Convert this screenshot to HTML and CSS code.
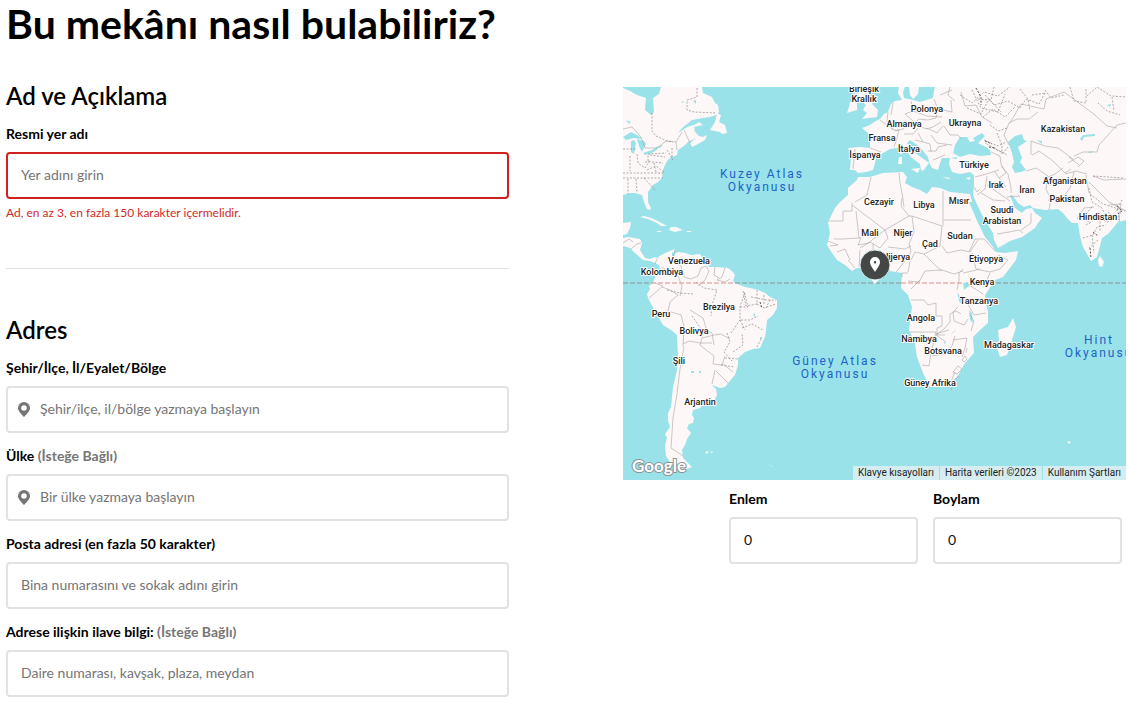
FILE: index.html
```html
<!DOCTYPE html>
<html lang="tr">
<head>
<meta charset="utf-8">
<title>Bu mekânı nasıl bulabiliriz?</title>
<link rel="stylesheet" href="styles.css">
</head>
<body>
<main class="page">
  <h1 class="title">Bu mekânı nasıl bulabiliriz?</h1>
  <div class="columns">
    <form class="form">
      <section class="section">
        <h2 class="heading">Ad ve Açıklama</h2>
        <div class="field">
          <label class="label" for="name">Resmi yer adı</label>
          <input class="input input-error" id="name" type="text" placeholder="Yer adını girin" aria-describedby="name-error">
          <p class="error" id="name-error">Ad, en az 3, en fazla 150 karakter içermelidir.</p>
        </div>
      </section>
      <hr class="divider">
      <section class="section">
        <h2 class="heading">Adres</h2>
        <div class="fields">
          <div class="field">
            <label class="label" for="city">Şehir/İlçe, İl/Eyalet/Bölge</label>
            <div class="input input-group">
              <svg class="pin" viewBox="0 0 12 15" aria-hidden="true"><path fill-rule="evenodd" d="M6 0a6 6 0 0 0-6 6c0 3 3.400 6.200 6 9 2.600-2.800 6-6 6-9a6 6 0 0 0-6-6zm0 3.200a2.800 2.800 0 1 1 0 5.600 2.800 2.800 0 0 1 0-5.600z"/></svg>
              <input class="bare" id="city" type="text" placeholder="Şehir/ilçe, il/bölge yazmaya başlayın">
            </div>
          </div>
          <div class="field">
            <label class="label" for="country">Ülke <span class="optional">(İsteğe Bağlı)</span></label>
            <div class="input input-group">
              <svg class="pin" viewBox="0 0 12 15" aria-hidden="true"><path fill-rule="evenodd" d="M6 0a6 6 0 0 0-6 6c0 3 3.400 6.200 6 9 2.600-2.800 6-6 6-9a6 6 0 0 0-6-6zm0 3.200a2.800 2.800 0 1 1 0 5.600 2.800 2.800 0 0 1 0-5.600z"/></svg>
              <input class="bare" id="country" type="text" placeholder="Bir ülke yazmaya başlayın">
            </div>
          </div>
          <div class="field">
            <label class="label" for="street">Posta adresi (en fazla 50 karakter)</label>
            <input class="input" id="street" type="text" placeholder="Bina numarasını ve sokak adını girin">
          </div>
          <div class="field">
            <label class="label" for="extra">Adrese ilişkin ilave bilgi: <span class="optional">(İsteğe Bağlı)</span></label>
            <input class="input" id="extra" type="text" placeholder="Daire numarası, kavşak, plaza, meydan">
          </div>
        </div>
      </section>
    </form>

    <aside class="location">
      <div class="map">
        <svg class="map-canvas" viewBox="623 87 503 393" preserveAspectRatio="xMidYMid slice" role="img" aria-label="Harita">
          <g class="land">
            <path d="M623 87H702L703 93 712 97 715 103 718 105 719 112 716 115 710 117 703 118 692 120 687 124 682 128 678 133 687 127 694 125 699 122 703 125 694 127 695 132 699 136 703 137 707 135 705 140 698 144 692 147 690 143 696 138 688 142 684 146 678 150 677 155 670 158 667 161 665 165 663 170 662 178 658 182 653 185 648 192 648 202 651 208 650 210 647 209 644 202 642 195 635 193 630 193 623 195z"/>
            <path d="M717 113 715 122 710 130 720 132 722 134 727 133 725 125 719 122 721 115z"/>
            <path d="M640 217 644 216 651 218 658 221 667 226 661 226 657 223 648 219zM669 230 671 227 676 227 683 230 675 232zM687 231h4v1h-4zM657 231h4v1h-4z"/>
            <path d="M623 223 631 222 630 228 627 234 623 235zM623 238 628 237 640 239 642 243 640 250 645 258 650 259 655 257 659 259 659 265 655 263 650 261 643 260 635 253 630 248 623 246z"/>
            <path d="M658 257 665 253 675 249 673 255 678 252 685 253 691 255 700 254 703 259 707 262 709 267 715 267 728 268 733 272 735 275 733 281 735 283 745 287 750 288 758 290 765 293 770 297 777 300 777 308 773 315 767 320 766 330 765 337 760 348 753 349 745 352 738 358 738 365 735 375 728 383 725 387 720 388 712 385 716 389 717 395 713 403 702 406 700 408 693 410 692 415 694 418 693 423 689 424 687 428 691 433 687 439 685 445 682 450 683 458 692 467 684 470 676 466 670 462 666 456 665 445 667 438 665 434 670 427 668 421 668 413 671 407 673 387 677 370 678 357 677 335 671 330 663 325 656 313 648 298 647 294 650 289 649 286 653 283 656 275 660 272 659 264z"/>
            <path d="M858 177 870 177 883 173 903 172 907 177 905 183 912 187 920 190 927 194 932 187 940 188 950 192 960 193 970 194 972 202 969 202 978 223 985 237 993 247 996 252 1005 253 1018 251 1016 260 1003 277 995 280 985 295 986 304 988 312 988 323 980 330 973 337 974 353 965 363 957 377 947 387 930 387 923 373 917 357 915 343 909 330 912 307 908 295 901 288 902 273 896 272 890 271 880 272 869 268 857 268 852 271 845 265 837 260 832 253 827 245 830 233 828 222 835 208 840 202 848 195 848 188 857 180z"/>
            <path d="M1013 318 1016 327 1012 340 1007 355 1000 357 997 348 999 340 998 330 1008 327z"/>
            <path d="M847 113 849 107 850 102 857 103 857 110zM853 87H870L868 93 870 100 873 105 878 110 877 117 862 119 867 113 863 110 866 105 861 101 855 95z"/>
            <path d="M848 148 860 147 870 148 870 140 868 133 862 128 870 125 874 122 880 119 884 114 888 112 891 104 895 101 902 100 898 93 899 87H905L903 92 904 98 913 100 920 102 933 98 934 91 935 87H1126V220L1118 222 1113 228 1108 234 1102 238 1100 246 1097 257 1091 261 1083 247 1080 236 1078 223 1072 223 1067 218 1063 213 1058 209 1045 210 1033 208 1030 205 1024 207 1018 203 1012 195 1010 195 1015 208 1022 213 1026 209 1032 208 1035 213 1042 218 1038 223 1035 228 1022 237 1010 241 998 248 994 240 993 233 983 217 975 200 973 195 974 185 974 175 970 172 960 174 952 172 949 164 950 158 942 158 940 163 938 170 932 168 929 162 928 157 920 147 910 140 907 143 915 153 925 160 929 163 923 171 921 170 920 164 912 158 907 152 902 145 897 148 890 149 883 153 876 158 875 163 873 170 866 172 858 173 855 170 850 170 851 157z"/>
            <path d="M909 87H919L918 94 913 99 910 95zM911 169 920 168 918 173zM899 157 902 157 902 164 898 164zM900 149h2v5h-2zM942 177l9 1-3 1zM966 178l5-1-2 3zM1100 256 1104 262 1102 267 1099 266 1098 260zM705 452l4-1-2 3zM710 452l3-1-1 2zM768 464l6 3-3-1zM1067 441l4 1-2 2z"/>
          </g>
          <g class="water">
            <path d="M623 87H661L659 94 653 98 654 112 651 115 645 110 646 98 637 95 630 91 623 88z"/>
            <path d="M626 120l5 2-2 2zM623 137l8-5 8 4 3 3-8-1-8 2zM631 141l3-1 2 3-2 11-3-2zM637 139l7 2 2 3-4 8-3-6zM643 153l9-3 5-3 1 2-6 4-7 2zM656 147l7-2-3 3zM681 102l3-1-1 2zM693 101l3-1v4zM672 252l3 2-1 5-2-2z"/>
            <path d="M953 153 955 145 960 137 967 137 970 142 975 141 973 138 982 133 985 136 978 143 986 147 990 150 991 155 980 156 970 154 960 157z"/>
            <path d="M1008 142 1015 136 1022 134 1024 140 1027 141 1018 147 1022 158 1020 162 1026 170 1021 172 1015 173 1012 167 1014 162 1012 153zM1080 139l3-4 12-1v2l-11 1-2 4zM1037 140l5 1v3zM1107 105l4-1-1 3zM1088 152l6-1-4 2zM1109 129l3 2zM950 158l7-1v2zM963 283l5-1 1 4-5 4zM957 292l2 9 4 5-1-7zM969 310l3 3 1 10-3-3zM951 334l5-5-2 3zM944 342l2 1-2 1zM691 371h3v2h-3zM699 371h2v2h-2zM760 337h2v2h-2zM753 315l2-2v4z"/>
          </g>
          <g class="border">
            <path d="M623 129 632 127 641 137 645 148 657 148 666 141 676 142 682 132M676 142 677 150M690 143 684 130M623 243l6-4 4 3M631 249l6-5 4-1M657 259l-2 5M661 267l10 5 7 4 4 10-2 10M675 250l-3 10 9 6 3 11 7 2M691 279l7-3 3-8 5-2M706 266l3 5-4 9-7 6M715 267l-1 8 5 3M725 268l-3 9-5 3 8 2 5-3M655 283l8 3-8 7-6 5M662 287l8 3 8 5-8 7-2 9 13 4M681 315l3 11-1 21M683 344l6-3 11 2 12 0M690 310l13 8 4 13 5 2 2 12M700 345l2-7 12-3 7-1 9 5M700 345l14 11-1 8 9 1 3-9M684 347l-4 22-3 25-4 24-2 30 12 8M723 364l10 8M716 371l12 12M712 384l3-14M855 202l12-7 4-18M852 203v8h-9v10h-15M899 173l1 10 2 10 2 14M902 198l-1 8 8 10-24 14-33-25M856 211l3 27-17 1-8 0M859 238l2 0-3 7 11-2 4-4 12-9M885 230l3 8-8 10-10-6-10 6M828 241l10 4-8 1M837 252l8-3 5 11M848 260l7 8M860 250l-1 17M873 244l1 24M884 252l-2 18M888 247l17 2 6-3M909 216l3 0 30 10M943 191v35M944 220h27M942 226l-2 20-16 8-9-2M912 216l2 16-5 12 2 8-6 9-9 11M915 252l-5 10-2 10M908 273h-6v4M924 254l12 12 6 5M942 246l5 7 14-3 9 2 8-12M908 281l11 1 6-11 17-1 12 4 9-3M911 289l9-9M911 300h13l4 5 8-2v13h6v10l-5 2v7l8 0M910 332h26l-2 9-3 12-2 13-7-1M936 334l13-4M932 356l12-2 8-8 3-10M946 342l-10-7M936 335l8-6 6-7 0-8 6-3 5 3M953 340l14-2-2 10-3 9M950 384l5-12M967 348l-1 5M951 390l3-10 5-4M957 290l2-9 0-8 4-4M966 283l17 11M966 301l8 14 12-2M958 307l-5 5 1 9 10 4 4-6M969 252l6-13 9 0 11 12M972 253l4 16 14 3 10-3 8-9-10-5M990 273l-3 7 0 8M963 273l9-2 8-2M970 315l4 6-3 10M953 372l5-6 4 3-5 5zM962 360l3-4 2 3-3 3z"/>
            <path d="M855 149l-2 20M870 148l11 4M880 120l14 10 5 0-2 8-3 9M888 112l-1 9 6 9M893 103l-2 12M911 101l2 10-8 3 8 7-10 8-8 2M913 111l14 5 15 1M934 99l4 10-2 9-8 2-9-1-10 9M938 109l14 3-1-12M950 87l-2 8 7 6M940 95l12-5M904 134l9 0 6-7 10 2 8 4 6-7M918 133l5 9 7 2 1 8M915 140l8 2M931 135l6 8 15 2M928 151l8 0 2-4 9-2M933 160l12-5M926 129l7-2 8-5M944 126l6 9 8 0 3 4M961 92l4 14 11-1 6 12 10 6M991 152l9 4 1 8 5 9-7 5-4-6M985 143l22 12M1001 166l7 8 3 14 0 5M975 177l8-2 16-5M974 187l3 5 3-3M977 195l8-6 2-13M987 185l23 16M981 193l12 7 12 1M1020 196l-13 1M997 234l12-2 10-2 4 3M1021 230l10-7 0-10M999 178l7 9M1026 171l10-3 12 8-2 13 5 10-2 11M1031 155V141l14 5 13 2 15 11M1046 178l9-4 8-6M1032 155l7-4 14 10 12 12 6-4M1065 174l11-3 11 3M1048 200l13 0 9-12 4-16M1009 145l-5-10 5-12 8-4 12 0 9-7M1010 123l11-19 23 5 2-10 18-7 15 11 16 12 12 11 10 2M1086 175l3 18M1089 182l20 20 17 9M1077 219l7-11 10-1M1074 156l9-4 14 0 2-7 18-20 9-2M1093 176l11 4 22-1M1109 205l12-1-2 18M1069 157l10 8M1068 163l10-6 6 4-6 6"/>
          </g>
          <g class="border dashed">
            <path d="M652 113V131L656 136 667 141 673 142M697 88v9l-10 3 0 10 7 2 22 1M623 149h14M623 173H665M623 178h40M628 179v15M636 179l1 14M630 156v15M637 154l1 9 7 5 5-8M645 162l8 0 10 1M650 155l15 2M644 178l12 13M654 163l2 9M667 150l6 10M672 148v11M648 161l0-7 18-1M647 170l9-4 9 7M667 290l13 3 13 1M696 282l8 6 13 2-5 15-1 11M692 316l10 14 6 4M731 333l9-13 0-14 5-13M740 307l8 0-4-16M743 291l3 15 11-2 0-14M751 297l16 3 9 0M757 304l7 4 12-4M741 320l9 0 8-4M740 320l5 10M727 333l3 9-6 10 8 9M742 328l10-4 11 6M733 352l10-7-1-12M757 347l4-8M725 358l13 1M721 365l14 2M764 295v10M770 300l-4 8"/>
            <path d="M960 95l12 8 12-11 14 4 12-9M972 90l9 18 17 4 7-18M978 99l13 1 3-13M967 108l14 6 8-15 12 13M983 117l10-8 12 8 10-10M985 95l9 10 14-4 12 7 6-9 13 5 6-11M1020 89l8 10 2 12M1032 95l14-2M1045 90l6 8 13-3M1070 87l4 14 12 2 0-14M1087 96l10-9 14 9 15 1M1098 103l9 8 13 4M1112 97l2 14M984 140l14 6 8-4M993 148l10 5 5-6M997 133l5 12 0 9M990 125l8 6 9-3M1089 188l3 14 10 6 5 12M1092 207l-8 9 6 8M1083 238l10-3 4-8 9-2M1092 235l2 18M1086 225l13-8 8 5 10-3M1098 240l-9 8M1093 176l30 2M1090 194l13 10 22 7M1117 205l2 15M1108 212l6 5M1122 200l-6 12M1100 218l0 14"/>
          </g>
          <g class="border dashed dark"><path d="M976 88l5 9 0 8M985 141l7 3M989 147l7 1M1117 206l5 5-4 3M1090 248l1 10M1093 232l5 4M760 302l2 6"/></g>
          <path class="equator" d="M623 283H651M735 283H901M996 283H1126"/>
          <path class="equator equator-land" d="M651 283H735M901 283H962"/>
          <g class="place">
            <text x="864" y="92">Birleşik</text><text x="864" y="102">Krallık</text>
            <text x="927" y="112">Polonya</text><text x="904" y="127">Almanya</text>
            <text x="965" y="126">Ukrayna</text><text x="882" y="141">Fransa</text>
            <text x="909" y="152">İtalya</text><text x="865" y="158">İspanya</text>
            <text x="1063" y="132">Kazakistan</text><text x="974" y="168">Türkiye</text>
            <text x="996" y="188">Irak</text><text x="1027" y="193">İran</text>
            <text x="1065" y="184">Afganistan</text><text x="1067" y="202">Pakistan</text>
            <text x="1098" y="220">Hindistan</text><text x="879" y="205">Cezayir</text>
            <text x="924" y="208">Libya</text><text x="959" y="204">Mısır</text>
            <text x="1002" y="213">Suudi</text><text x="1002" y="224">Arabistan</text>
            <text x="870" y="236">Mali</text><text x="903" y="236">Nijer</text>
            <text x="930" y="247">Çad</text><text x="960" y="239">Sudan</text>
            <text x="896" y="260">Nijerya</text><text x="986" y="262">Etiyopya</text>
            <text x="982" y="285">Kenya</text><text x="979" y="304">Tanzanya</text>
            <text x="921" y="321">Angola</text><text x="919" y="342">Namibya</text>
            <text x="943" y="354">Botsvana</text><text x="930" y="386">Güney Afrika</text>
            <text x="1009" y="348">Madagaskar</text><text x="689" y="264">Venezuela</text>
            <text x="662" y="275">Kolombiya</text><text x="719" y="310">Brezilya</text>
            <text x="661" y="317">Peru</text><text x="694" y="334">Bolivya</text>
            <text x="679" y="364">Şili</text><text x="700" y="405">Arjantin</text>
          </g>
          <g class="ocean">
            <text x="762" y="178">Kuzey Atlas</text><text x="762" y="191">Okyanusu</text>
            <text x="835" y="365">Güney Atlas</text><text x="835" y="378">Okyanusu</text>
            <text x="1099" y="344">Hint</text><text x="1099" y="357">Okyanusu</text>
          </g>
          <g class="marker">
            <path class="marker-tip" d="M869 277h12l-6 7z"/>
            <circle class="marker-disc" cx="875" cy="265" r="15"/>
            <path class="marker-pin" fill-rule="evenodd" d="M875 257a5 5 0 0 0-5 5c0 3 3 7 5 10 2-3 5-7 5-10a5 5 0 0 0-5-5zm0 4a1.200 1.200 0 1 1 0 2.400 1.200 1.200 0 0 1 0-2.400z"/>
          </g>
        </svg>
        <span class="brand">Google</span>
        <div class="credits">
          <button class="credit" type="button">Klavye kısayolları</button>
          <span class="credit">Harita verileri ©2023</span>
          <a class="credit" href="#">Kullanım Şartları</a>
        </div>
      </div>
      <div class="coordinates">
        <div class="field">
          <label class="label" for="lat">Enlem</label>
          <input class="input" id="lat" type="text" value="0">
        </div>
        <div class="field">
          <label class="label" for="lng">Boylam</label>
          <input class="input" id="lng" type="text" value="0">
        </div>
      </div>
    </aside>
  </div>
</main>
</body>
</html>
```
FILE: styles.css
```css
* { box-sizing: border-box; }
body {
  margin: 0;
  background: #fff;
  color: #000;
  font: 14px/20px Lato, "Liberation Sans", sans-serif;
}
.page { padding: 0 4px 0 6px; }
.title { margin: 0 0 32px; font-size: 41px; line-height: 48px; font-weight: 700; }
.columns { display: grid; grid-template-columns: 1fr 1fr; gap: 114px; }
.heading { margin: 0 0 12px; font-size: 24px; line-height: 32px; font-weight: 600; }
.fields { display: grid; gap: 13px; }
.field { display: flex; flex-direction: column; min-width: 0; }
.label { margin-bottom: 8px; font-size: 14px; line-height: 20px; font-weight: 700; }
.optional { color: #757575; }
.input {
  width: 100%;
  height: 47px;
  padding: 0 13px 2px;
  border: 2px solid #e2e2e2;
  border-radius: 4px;
  background: #fff;
  color: #111;
  font: inherit;
}
.input-error { border-color: #d22020; }
.input::placeholder, .bare::placeholder { color: #757575; opacity: 1; }
.input-group { display: flex; align-items: center; gap: 10px; padding: 0 10px 1px; }
.pin { width: 12px; height: 15px; fill: #757575; }
.bare { flex: 1; min-width: 0; padding: 0; border: 0; outline: 0; background: none; font: inherit; }
.error { margin: 5px 0 0; font-size: 12px; line-height: 18px; color: #cf2a2a; }
.divider { margin: 46px 0 45px; border: 0; border-top: 1px solid #e0e0e0; }

.location { padding-top: 7px; min-width: 0; }
.map { position: relative; aspect-ratio: 503 / 393; background: #99e2ea; overflow: hidden; }
.map-canvas { display: block; width: 100%; height: 100%; }
.land { fill: #fdf8f7; }
.water { fill: #99e2ea; }
.border { fill: none; stroke: #aaa5a5; stroke-width: .6; stroke-linejoin: round; }
.dashed { stroke: #777; stroke-dasharray: 2 1.500; }
.dark { stroke: #555; stroke-width: 1; }
.equator { stroke: #8f9294; stroke-width: 1; stroke-dasharray: 5 2; }
.equator-land { stroke: #d98f8f; }
.place {
  font: 500 9px Roboto, sans-serif;
  fill: #222;
  stroke: #fff;
  stroke-width: 2;
  stroke-linejoin: round;
  paint-order: stroke;
  text-anchor: middle;
}
.ocean { font: 12px Roboto, sans-serif; fill: #1d63c4; letter-spacing: 2px; text-anchor: middle; }
.marker-disc { fill: #444746; stroke: #d7eef0; stroke-width: 1; }
.marker-tip, .marker-pin { fill: #fff; }
.brand {
  position: absolute;
  left: 9px;
  bottom: 2px;
  color: #fff;
  font: 700 17px/24px Lato, sans-serif;
  -webkit-text-stroke: 2px #8a9496;
  paint-order: stroke fill;
}
.credits { position: absolute; right: 0; bottom: 0; display: flex; gap: 1px; }
.credit {
  padding: 0 5px;
  border: 0;
  background: #d5edf0;
  color: #222;
  font: 10px/14px Roboto, sans-serif;
  text-decoration: none;
}
.coordinates {
  display: grid;
  grid-template-columns: 1fr 1fr;
  gap: 15px;
  margin: 9px 4px 0 106px;
}
```
